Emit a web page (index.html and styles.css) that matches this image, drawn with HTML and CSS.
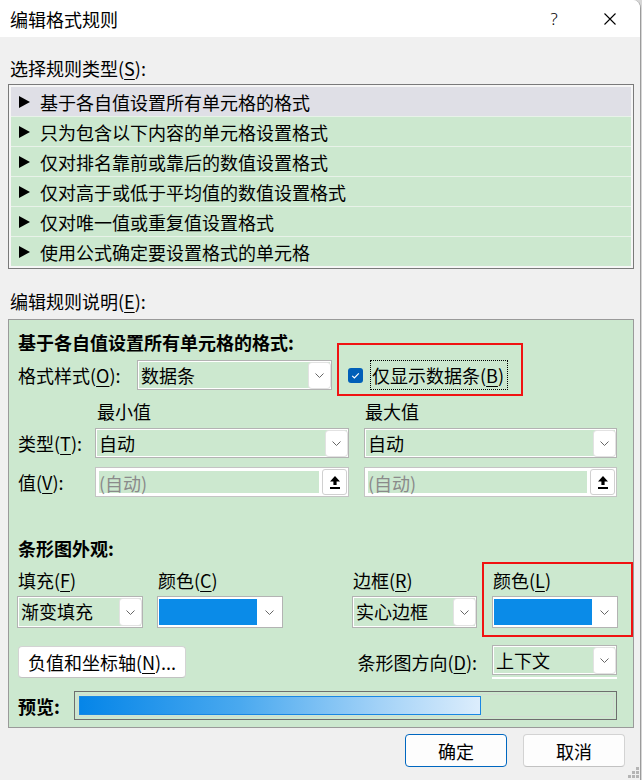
FILE: index.html
```html
<!DOCTYPE html>
<html lang="zh-CN">
<head>
<meta charset="utf-8">
<title>编辑格式规则</title>
<link rel="stylesheet" href="styles.css">
</head>
<body>
<div class="window">
  <header class="titlebar">
    <span class="title">编辑格式规则</span>
    <span class="help">?</span>
    <span class="close"><svg width="12" height="12" viewBox="0 0 12 12"><path d="M0.5 0.5 L11.5 11.5 M11.5 0.5 L0.5 11.5" stroke="#000" stroke-width="1.1" fill="none"/></svg></span>
  </header>
  <main class="body">
    <div class="caption cap-type">选择规则类型(<u>S</u>):</div>
    <ul class="rules">
      <li class="rule selected"><svg class="tri" width="11" height="12" viewBox="0 0 11 12"><polygon points="0,0 11,6 0,12" fill="#000"/></svg>基于各自值设置所有单元格的格式</li>
      <li class="rule"><svg class="tri" width="11" height="12" viewBox="0 0 11 12"><polygon points="0,0 11,6 0,12" fill="#000"/></svg>只为包含以下内容的单元格设置格式</li>
      <li class="rule"><svg class="tri" width="11" height="12" viewBox="0 0 11 12"><polygon points="0,0 11,6 0,12" fill="#000"/></svg>仅对排名靠前或靠后的数值设置格式</li>
      <li class="rule"><svg class="tri" width="11" height="12" viewBox="0 0 11 12"><polygon points="0,0 11,6 0,12" fill="#000"/></svg>仅对高于或低于平均值的数值设置格式</li>
      <li class="rule"><svg class="tri" width="11" height="12" viewBox="0 0 11 12"><polygon points="0,0 11,6 0,12" fill="#000"/></svg>仅对唯一值或重复值设置格式</li>
      <li class="rule"><svg class="tri" width="11" height="12" viewBox="0 0 11 12"><polygon points="0,0 11,6 0,12" fill="#000"/></svg>使用公式确定要设置格式的单元格</li>
    </ul>
    <div class="caption cap-desc">编辑规则说明(<u>E</u>):</div>
    <section class="panel">
      <div class="heading">基于各自值设置所有单元格的格式:</div>
      <div class="row-style">
        <span class="lbl lbl-style">格式样式(<u>O</u>):</span>
        <div class="select sel-style"><span class="val">数据条</span><span class="arrow"><svg width="9" height="5" viewBox="0 0 9 5"><path d="M0.5 0.5 L4.5 4.5 L8.5 0.5" stroke="#666" stroke-width="1" fill="none"/></svg></span></div>
        <div class="check">
          <span class="box"><svg width="15" height="15" viewBox="0 0 15 15"><path d="M4.2 7.8 L6.4 10 L10.8 5.4" stroke="#fff" stroke-width="1.2" fill="none"/></svg></span>
          <span class="focus">仅显示数据条(<u>B</u>)</span>
        </div>
      </div>
      <div class="grid3 row-heads">
        <span></span>
        <span class="colhead">最小值</span>
        <span class="colhead colhead-max">最大值</span>
      </div>
      <div class="grid3 row-type">
        <span class="lbl">类型(<u>T</u>):</span>
        <div class="select"><span class="val">自动</span><span class="arrow"><svg width="9" height="5" viewBox="0 0 9 5"><path d="M0.5 0.5 L4.5 4.5 L8.5 0.5" stroke="#666" stroke-width="1" fill="none"/></svg></span></div>
        <div class="select"><span class="val">自动</span><span class="arrow"><svg width="9" height="5" viewBox="0 0 9 5"><path d="M0.5 0.5 L4.5 4.5 L8.5 0.5" stroke="#666" stroke-width="1" fill="none"/></svg></span></div>
      </div>
      <div class="grid3 row-value">
        <span class="lbl">值(<u>V</u>):</span>
        <div class="vinput"><span class="vfield">(自动)</span><span class="vbtn"><svg width="10" height="13" viewBox="0 0 10 13"><path d="M5 0 L10 5.5 L6.6 5.5 L6.6 9 L3.4 9 L3.4 5.5 L0 5.5 Z" fill="#000"/><rect x="0" y="11" width="10" height="2" fill="#000"/></svg></span></div>
        <div class="vinput"><span class="vfield">(自动)</span><span class="vbtn"><svg width="10" height="13" viewBox="0 0 10 13"><path d="M5 0 L10 5.5 L6.6 5.5 L6.6 9 L3.4 9 L3.4 5.5 L0 5.5 Z" fill="#000"/><rect x="0" y="11" width="10" height="2" fill="#000"/></svg></span></div>
      </div>
      <div class="heading heading-bar">条形图外观:</div>
      <div class="grid4 row-labels">
        <span class="lbl">填充(<u>F</u>)</span>
        <span class="lbl">颜色(<u>C</u>)</span>
        <span class="lbl">边框(<u>R</u>)</span>
        <span class="lbl">颜色(<u>L</u>)</span>
      </div>
      <div class="grid4 row-controls">
        <div class="select tall sel-fill"><span class="val">渐变填充</span><span class="arrow"><svg width="9" height="5" viewBox="0 0 9 5"><path d="M0.5 0.5 L4.5 4.5 L8.5 0.5" stroke="#666" stroke-width="1" fill="none"/></svg></span></div>
        <div class="cselect"><span class="swatch"></span><span class="carrow"><svg width="9" height="5" viewBox="0 0 9 5"><path d="M0.5 0.5 L4.5 4.5 L8.5 0.5" stroke="#666" stroke-width="1" fill="none"/></svg></span></div>
        <div class="select tall sel-border"><span class="val">实心边框</span><span class="arrow"><svg width="9" height="5" viewBox="0 0 9 5"><path d="M0.5 0.5 L4.5 4.5 L8.5 0.5" stroke="#666" stroke-width="1" fill="none"/></svg></span></div>
        <div class="cselect"><span class="swatch"></span><span class="carrow"><svg width="9" height="5" viewBox="0 0 9 5"><path d="M0.5 0.5 L4.5 4.5 L8.5 0.5" stroke="#666" stroke-width="1" fill="none"/></svg></span></div>
      </div>
      <div class="row-dir">
        <button class="btn btn-neg" type="button">负值和坐标轴(<u>N</u>)...</button>
        <span class="spacer"></span>
        <span class="lbl lbl-dir">条形图方向(<u>D</u>):</span>
        <div class="select sel-dir"><span class="val">上下文</span><span class="arrow"><svg width="9" height="5" viewBox="0 0 9 5"><path d="M0.5 0.5 L4.5 4.5 L8.5 0.5" stroke="#666" stroke-width="1" fill="none"/></svg></span></div>
      </div>
      <div class="row-preview">
        <span class="pv-label">预览:</span>
        <div class="preview"><div class="pv-inner"><div class="pv-bar"></div></div></div>
      </div>
      <div class="mark mark-check"></div>
      <div class="mark mark-color"></div>
    </section>
    <footer class="footer">
      <button class="btn btn-ok" type="button">确定</button>
      <button class="btn btn-cancel" type="button">取消</button>
    </footer>
  </main>
  <svg class="grip" width="14" height="14" viewBox="0 0 14 14">
    <rect x="10" y="2" width="3" height="3" fill="#b5b5b5"/>
    <rect x="6" y="6" width="3" height="3" fill="#b5b5b5"/>
    <rect x="10" y="6" width="3" height="3" fill="#b5b5b5"/>
    <rect x="2" y="10" width="3" height="3" fill="#b5b5b5"/>
    <rect x="6" y="10" width="3" height="3" fill="#b5b5b5"/>
    <rect x="10" y="10" width="3" height="3" fill="#b5b5b5"/>
  </svg>
</div>
</body>
</html>
```
FILE: styles.css
```css
* { box-sizing: border-box; }
html, body { margin: 0; padding: 0; }
body {
  width: 642px;
  height: 780px;
  overflow: hidden;
  background: #d6d6d6;
  font-family: "Noto Sans CJK SC", "Noto Sans", sans-serif;
  font-size: 18px;
  color: #000;
}
u {
  text-decoration: underline;
  text-decoration-thickness: 1px;
  text-underline-offset: 3px;
}
.window {
  position: relative;
  width: 641px;
  height: 780px;
  background: #f0f0f0;
  border-right: 1px solid #9b9b9b;
  border-top-right-radius: 8px;
  overflow: hidden;
}
.titlebar {
  height: 37px;
  background: #fff;
  display: flex;
  align-items: center;
  padding-left: 10px;
}
.title { flex: 1; line-height: 24px; }
.help {
  width: 20px;
  text-align: center;
  font-family: "Noto Sans", sans-serif;
  font-size: 17px;
  font-weight: 300;
  line-height: 24px;
  margin-right: 40px;
}
.close {
  width: 12px;
  height: 12px;
  display: flex;
  margin-right: 24px;
}
.body {
  padding: 0 6px 0 8px;
}
.caption { line-height: 24px; padding-left: 2px; }
.cap-type { margin-top: 19px; }
.cap-desc { margin-top: 20px; }
.rules {
  list-style: none;
  margin: 4px 0 0 0;
  padding: 2px;
  border: 1px solid #7a7a7a;
  background: #f6f6f6;
}
.rule {
  height: 30px;
  display: flex;
  align-items: center;
  padding-left: 8px;
  background: #cce8cf;
  border-bottom: 1px solid #e8f2e9;
  line-height: 24px;
}
.rule:last-child { height: 29px; border-bottom: none; }
.rule.selected { background: #dfdfe6; }
.tri { margin-right: 10px; flex: none; }

.panel {
  position: relative;
  margin-top: 6px;
  border: 1px solid #9a9a9a;
  background: #cce8cf;
  padding: 10px 16px 7px 9px;
}
.heading { font-weight: 700; line-height: 24px; }
.heading-bar { margin-top: 39px; }
.lbl { line-height: 24px; white-space: nowrap; }

.row-style {
  margin-top: 6px;
  height: 30px;
  display: flex;
  align-items: center;
}
.lbl-style { width: 119px; }
.select {
  display: flex;
  align-items: stretch;
  height: 30px;
  border: 1px solid #b3b3b3;
  background: #cce8cf;
  box-shadow: inset 0 0 0 1px #fff;
  padding: 2px 1px 1px 3px;
}
.select.tall { height: 32px; padding: 2px 1px 2px 3px; }
.select .val { flex: 1; line-height: 25px; white-space: nowrap; overflow: hidden; }
.select .arrow {
  width: 21px;
  background: #fff;
  border-radius: 3px;
  box-shadow: 0 0 0 1px #e2e2e2;
  display: flex;
  align-items: center;
  justify-content: center;
}
.sel-style { width: 195px; }
.check { display: flex; align-items: center; margin-left: 16px; }
.box {
  width: 15px;
  height: 15px;
  border-radius: 3px;
  background: #005fb8;
  display: flex;
}
.focus {
  margin-left: 7px;
  border: 1px dotted #000;
  line-height: 28px;
  padding: 0 3px 0 1px;
}

.grid3 {
  display: grid;
  grid-template-columns: 77px 269px 253px;
}
.grid3 > :nth-child(2) { width: 254px; }
.row-heads { margin-top: 9px; line-height: 24px; }
.colhead { padding-left: 2px; }
.colhead-max { padding-left: 1px; }
.row-type { margin-top: 5px; align-items: center; }
.row-value { margin-top: 9px; align-items: center; }
.vinput {
  display: flex;
  height: 30px;
  border: 1px solid #c4c4c4;
  background: #fff;
  padding: 1px;
}
.vfield {
  flex: 1;
  margin: 2px 3px 2px 2px;
  background: #cce8cf;
  color: #8a8a8a;
  line-height: 24px;
}
.vbtn {
  width: 25px;
  border: 1px solid #d0d0d0;
  border-radius: 3px;
  background: #fff;
  display: flex;
  align-items: center;
  justify-content: center;
}

.grid4 {
  display: grid;
  grid-template-columns: 139px 195px 140px 126px;
}
.row-labels { margin-top: 8px; }
.row-labels .lbl:not(:first-child) { padding-left: 1px; }
.row-controls { margin-top: 4px; }
.sel-fill { width: 126px; margin-left: -1px; }
.sel-border { width: 125px; }
.cselect {
  display: flex;
  width: 126px;
  height: 32px;
  border: 1px solid #b3b3b3;
  background: #fff;
  padding: 2px 1px 2px 1px;
}
.swatch { flex: 1; background: #0a8be8; }
.carrow {
  width: 24px;
  display: flex;
  align-items: center;
  justify-content: center;
  background: #fff;
}

.row-dir {
  margin-top: 17px;
  height: 34px;
  display: flex;
  align-items: center;
}
.btn {
  font: inherit;
  color: #000;
  background: #fdfdfd;
  border: 1px solid #d3d3d3;
  border-bottom-color: #c2c2c2;
  border-radius: 4px;
  padding: 0;
  line-height: 24px;
  display: flex;
  align-items: center;
  justify-content: center;
}
.btn-neg { width: 168px; height: 32px; background: #fff; }
.spacer { flex: 1; }
.lbl-dir { margin-right: 15px; }
.sel-dir {
  width: 125px;
  align-self: flex-start;
  box-shadow: inset 0 0 0 1px #fff, 0 2px 0 #cce8cf, 0 4px 0 #fff;
}

.row-preview {
  margin-top: 12px;
  display: flex;
  align-items: center;
}
.pv-label { width: 56px; font-weight: 700; line-height: 24px; }
.preview {
  flex: 1;
  height: 29px;
  border: 1px solid #6e6e6e;
  padding: 2px;
}
.pv-inner {
  height: 100%;
  border: 1px solid #d3dcd3;
  padding: 1px;
}
.pv-bar {
  width: 402px;
  height: 19px;
  border: 1px solid #1a86e4;
  background: linear-gradient(to right, #0585e8 0%, #4aa9ef 40%, #a3d2f7 75%, #dcedfc 100%);
}

.mark {
  position: absolute;
  border: 2px solid #f01212;
}
.mark-check { left: 328px; top: 23px; width: 186px; height: 53px; }
.mark-color { left: 473px; top: 242px; width: 151px; height: 75px; }

.footer {
  margin-top: 6px;
  display: flex;
  justify-content: flex-end;
  gap: 16px;
  padding-right: 9px;
}
.btn-ok, .btn-cancel { width: 102px; height: 33px; }
.btn-ok { border: 1px solid #0067c0; background: #fdfdfd; }
.btn-cancel { background: #fdfdfd; }

.grip { position: absolute; right: 0; bottom: 1px; }
```
